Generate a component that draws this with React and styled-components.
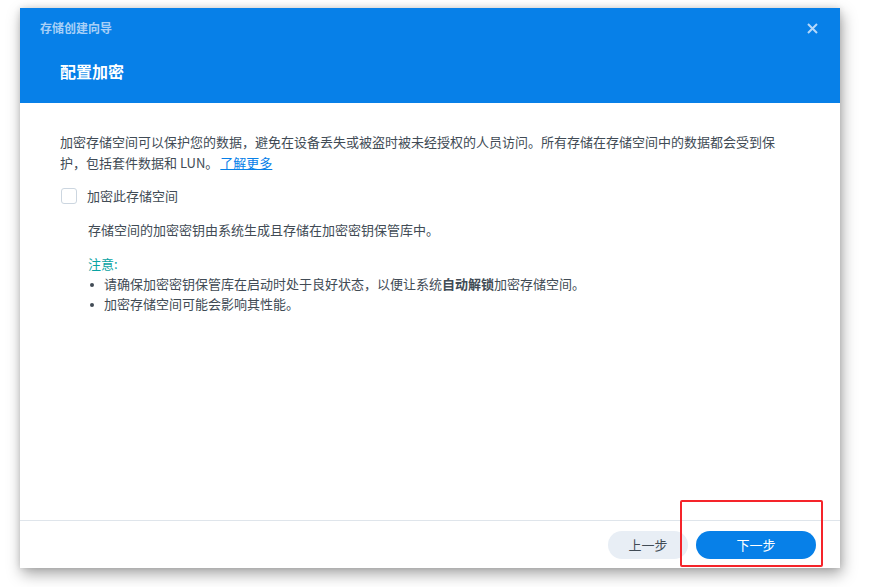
import React from 'react'
import styled, { createGlobalStyle } from 'styled-components'

const GlobalStyle = createGlobalStyle`
  html, body {
    margin: 0;
    padding: 0;
    background: #fff;
  }
  body {
    font-family: "Noto Sans CJK SC", "Noto Sans", sans-serif;
  }
`

const Page = styled.div`
  position: relative;
  width: 871px;
  height: 587px;
  padding: 8px 0 0 20px;
  box-sizing: border-box;
  overflow: hidden;
`

const Dialog = styled.div`
  width: 820px;
  height: 560px;
  background: #fff;
  display: flex;
  flex-direction: column;
  box-shadow: 2px 6px 14px rgba(0, 0, 0, 0.35), 0 0 6px rgba(0, 0, 0, 0.12);
`

const Header = styled.div`
  background: #0780e8;
  height: 95px;
  box-sizing: border-box;
  padding: 11px 20px 0 20px;
  display: flex;
  flex-direction: column;
`

const TitleBar = styled.div`
  display: flex;
  align-items: center;
  justify-content: space-between;
  height: 18px;
`

const WizardTitle = styled.div`
  font-size: 12px;
  font-weight: 700;
  color: #a8d0f7;
  line-height: 18px;
`

const CloseButton = styled.button`
  border: 0;
  background: none;
  padding: 0;
  width: 16px;
  height: 16px;
  display: flex;
  align-items: center;
  justify-content: center;
  cursor: pointer;
`

const StepTitle = styled.div`
  margin: 23px 0 0 20px;
  font-size: 16px;
  font-weight: 700;
  color: #fff;
  line-height: 22px;
`

const Body = styled.div`
  flex: 1;
  padding: 28px 40px 0 40px;
  color: #414b55;
  font-size: 13px;
  line-height: 21px;
`

const Intro = styled.p`
  margin: 0;
`

const Link = styled.a`
  margin-left: 2px;
  color: #0780e8;
  text-decoration: underline;
`

const CheckRow = styled.label`
  display: flex;
  align-items: center;
  gap: 10px;
  margin-top: 12px;
`

const Box = styled.span`
  width: 16px;
  height: 16px;
  border: 1px solid #ccd6e0;
  border-radius: 3px;
  box-sizing: border-box;
  margin-left: 1px;
  background: #fff;
`

const Indented = styled.div`
  padding-left: 28px;
`

const Desc = styled.p`
  margin: 13px 0 0;
`

const NoteTitle = styled.div`
  margin-top: 13px;
  color: #0aa3a3;
`

const List = styled.ul`
  margin: 0;
  padding: 0;
  list-style: none;
`

const Item = styled.li`
  position: relative;
  padding-left: 16px;
  line-height: 20px;
  &::before {
    content: '';
    position: absolute;
    left: 2px;
    top: 9px;
    width: 4px;
    height: 4px;
    border-radius: 50%;
    background: #414b55;
  }
  b {
    font-weight: 700;
  }
`

const Footer = styled.div`
  height: 48px;
  box-sizing: border-box;
  border-top: 1px solid #dfe5eb;
  display: flex;
  align-items: center;
  justify-content: flex-end;
  gap: 8px;
  padding: 0 24px;
`

const Button = styled.button`
  height: 28px;
  min-width: ${props => (props.primary ? '120px' : '80px')};
  border: 0;
  border-radius: 14px;
  font-family: inherit;
  font-size: 13px;
  background: ${props => (props.primary ? '#0780e8' : '#e8eef5')};
  color: ${props => (props.primary ? '#fff' : '#414b55')};
  cursor: pointer;
`

const Highlight = styled.div`
  position: absolute;
  left: 680px;
  top: 500px;
  width: 143px;
  height: 67px;
  border: 2px solid #f5242a;
  border-radius: 2px;
  box-sizing: border-box;
  pointer-events: none;
`

const App = () => {
  return (
    <>
      <GlobalStyle />
      <Page>
        <Dialog>
          <Header>
            <TitleBar>
              <WizardTitle>存储创建向导</WizardTitle>
              <CloseButton aria-label='close'>
                <svg width='11' height='11' viewBox='0 0 11 11'>
                  <path d='M1 1L10 10M10 1L1 10' stroke='#b5d8fa' strokeWidth='2' />
                </svg>
              </CloseButton>
            </TitleBar>
            <StepTitle>配置加密</StepTitle>
          </Header>
          <Body>
            <Intro>
              加密存储空间可以保护您的数据，避免在设备丢失或被盗时被未经授权的人员访问。所有存储在存储空间中的数据都会受到保护，包括套件数据和 LUN。<Link href='#'>了解更多</Link>
            </Intro>
            <CheckRow>
              <Box />
              <span>加密此存储空间</span>
            </CheckRow>
            <Indented>
              <Desc>存储空间的加密密钥由系统生成且存储在加密密钥保管库中。</Desc>
              <NoteTitle>注意:</NoteTitle>
              <List>
                <Item>
                  请确保加密密钥保管库在启动时处于良好状态，以便让系统<b>自动解锁</b>加密存储空间。
                </Item>
                <Item>加密存储空间可能会影响其性能。</Item>
              </List>
            </Indented>
          </Body>
          <Footer>
            <Button>上一步</Button>
            <Button primary>下一步</Button>
          </Footer>
        </Dialog>
        <Highlight />
      </Page>
    </>
  )
}

export default App
